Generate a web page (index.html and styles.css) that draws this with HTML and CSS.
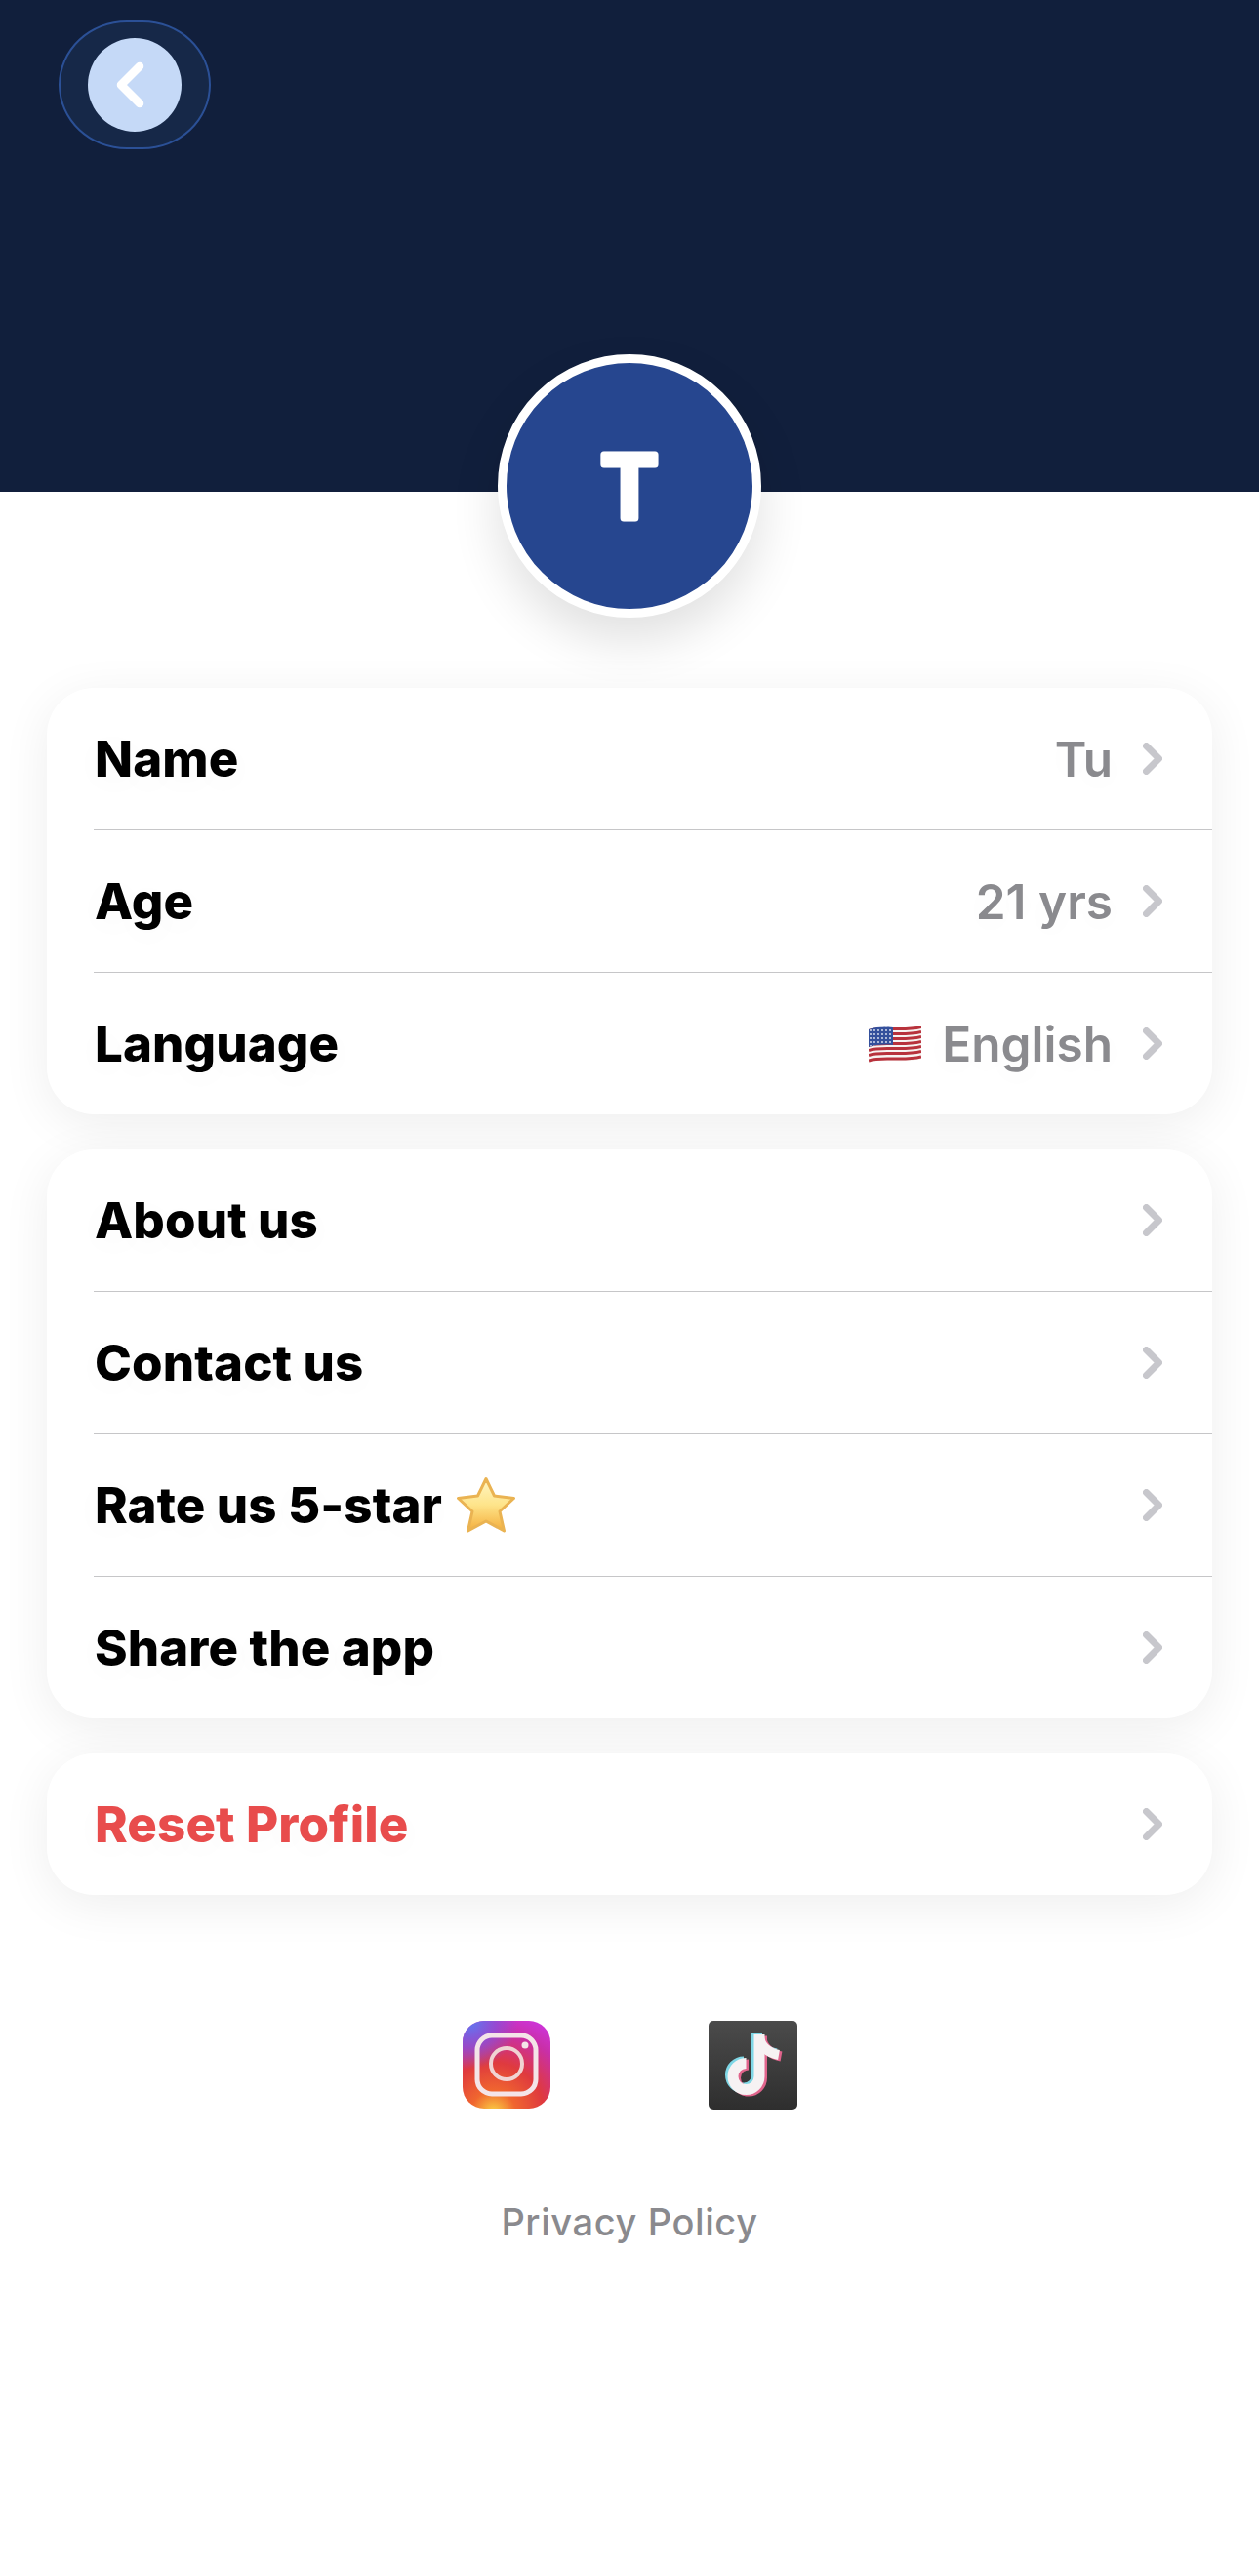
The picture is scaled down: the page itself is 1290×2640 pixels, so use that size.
FILE: index.html
```html
<!DOCTYPE html>
<html lang="en">
<head>
    <meta charset="UTF-8">
    <meta name="viewport" content="width=device-width, initial-scale=1.0">
    <title>Profile</title>
    <link rel="stylesheet" href="styles.css">
</head>
<body>
    <svg class="defs" width="0" height="0">
        <symbol id="chevron" viewBox="0 0 20 33">
            <path d="M3.5 3.5 L16.5 16.5 L3.5 29.5" fill="none" stroke="#c7c7cc" stroke-width="7" stroke-linecap="round" stroke-linejoin="round"/>
        </symbol>
    </svg>

    <header class="header">
        <div class="back-btn">
            <div class="back-circle">
                <svg width="96" height="96" viewBox="0 0 96 96">
                    <path d="M53 29 L34 48 L53 67" fill="none" stroke="#fff" stroke-width="8.500" stroke-linecap="round" stroke-linejoin="round"/>
                </svg>
            </div>
        </div>
    </header>

    <div class="avatar">
        <svg width="252" height="252" viewBox="0 0 252 252">
            <text class="avatar-letter" x="126" y="159">T</text>
        </svg>
    </div>

    <main class="cards">
        <section class="card">
            <div class="row">
                <span class="label">Name</span>
                <span class="value">Tu</span>
                <svg class="chevron"><use href="#chevron"/></svg>
            </div>
            <div class="row">
                <span class="label">Age</span>
                <span class="value">21 yrs</span>
                <svg class="chevron"><use href="#chevron"/></svg>
            </div>
            <div class="row">
                <span class="label">Language</span>
                <svg class="flag" width="54" height="40" viewBox="0 0 54 40">
                    <defs>
                        <pattern id="stars" width="4" height="4" patternUnits="userSpaceOnUse">
                            <circle cx="2" cy="2" r="0.9" fill="#e6ebf5"/>
                        </pattern>
                    </defs>
                    <path d="M0 5 C14 0 34 6 54 1 V35 C34 40 14 34 0 39 Z" fill="#f7f3f1"/>
                    <g fill="none" stroke="#b8323c" stroke-width="3">
                        <path d="M0 6.500 C14 1.500 34 7.500 54 2.500"/>
                        <path d="M0 11.500 C14 6.500 34 12.500 54 7.500"/>
                        <path d="M0 16.500 C14 11.500 34 17.500 54 12.500"/>
                        <path d="M0 21.500 C14 16.500 34 22.500 54 17.500"/>
                        <path d="M0 26.500 C14 21.500 34 27.500 54 22.500"/>
                        <path d="M0 31.500 C14 26.500 34 32.500 54 27.500"/>
                        <path d="M0 37 C14 32 34 38 54 33"/>
                    </g>
                    <path d="M0 5 C8 2.500 16 2.200 25 3 V21 C16 20 8 20.500 0 23 Z" fill="#34509c"/>
                    <path d="M0 5 C8 2.500 16 2.200 25 3 V21 C16 20 8 20.500 0 23 Z" fill="url(#stars)"/>
                </svg>
                <span class="value value-lang">English</span>
                <svg class="chevron"><use href="#chevron"/></svg>
            </div>
        </section>

        <section class="card">
            <div class="row">
                <span class="label">About us</span>
                <svg class="chevron"><use href="#chevron"/></svg>
            </div>
            <div class="row">
                <span class="label">Contact us</span>
                <svg class="chevron"><use href="#chevron"/></svg>
            </div>
            <div class="row">
                <span class="label">Rate us 5-star</span>
                <svg class="star" width="62" height="59" viewBox="0 0 62 59">
                    <defs>
                        <linearGradient id="starFill" x1="0" y1="0" x2="0" y2="1">
                            <stop offset="0" stop-color="#fff6c4"/>
                            <stop offset="0.5" stop-color="#fee48a"/>
                            <stop offset="1" stop-color="#f4ae3c"/>
                        </linearGradient>
                    </defs>
                    <path d="M31 2.500 L39.500 20 L59.500 22.500 L45 36 L49.500 56 L31 46 L12.500 56 L17 36 L2.500 22.500 L22.500 20 Z" fill="url(#starFill)" stroke="#eab352" stroke-width="3" stroke-linejoin="round"/>
                </svg>
                <svg class="chevron"><use href="#chevron"/></svg>
            </div>
            <div class="row">
                <span class="label">Share the app</span>
                <svg class="chevron"><use href="#chevron"/></svg>
            </div>
        </section>

        <section class="card">
            <div class="row">
                <span class="label label-danger">Reset Profile</span>
                <svg class="chevron"><use href="#chevron"/></svg>
            </div>
        </section>
    </main>

    <div class="social">
        <svg width="90" height="90" viewBox="0 0 90 90">
            <defs>
                <radialGradient id="igBase" cx="0.35" cy="1.05" r="1.15">
                    <stop offset="0" stop-color="#fbd846"/>
                    <stop offset="0.22" stop-color="#f0662f"/>
                    <stop offset="0.5" stop-color="#df3a3e"/>
                    <stop offset="0.8" stop-color="#c92fa6"/>
                    <stop offset="1" stop-color="#cd34d8"/>
                </radialGradient>
                <radialGradient id="igBlue" cx="0.08" cy="0" r="0.55">
                    <stop offset="0" stop-color="#5a7cf2"/>
                    <stop offset="0.55" stop-color="#8a4fd8" stop-opacity="0.8"/>
                    <stop offset="1" stop-color="#8a4fd8" stop-opacity="0"/>
                </radialGradient>
            </defs>
            <rect width="90" height="90" rx="22" fill="url(#igBase)"/>
            <rect width="90" height="90" rx="22" fill="url(#igBlue)"/>
            <rect x="15" y="15" width="60" height="60" rx="15" fill="none" stroke="#f4e4e8" stroke-width="5"/>
            <circle cx="45" cy="44" r="16" fill="none" stroke="#f0d3d3" stroke-width="4"/>
            <circle cx="64" cy="25" r="3.500" fill="#f4e4e8"/>
        </svg>
        <svg width="91" height="91" viewBox="0 0 91 91">
            <defs>
                <linearGradient id="ttBase" x1="0" y1="0" x2="0" y2="1">
                    <stop offset="0" stop-color="#4b4b4b"/>
                    <stop offset="1" stop-color="#2e2e2e"/>
                </linearGradient>
                <g id="note" fill="none" stroke-width="11" stroke-linecap="butt">
                    <path d="M52 14 V57 A13.500 13.500 0 1 1 38.500 43.500"/>
                    <path d="M52 16 C53 26 61 33 72 35" stroke-width="10"/>
                </g>
            </defs>
            <rect width="91" height="91" rx="5" fill="url(#ttBase)"/>
            <use href="#note" stroke="#7fd7e6" x="-2.500" y="-1.500"/>
            <use href="#note" stroke="#e0648c" x="2.500" y="1.500"/>
            <use href="#note" stroke="#f6f2f3"/>
        </svg>
    </div>

    <div class="privacy">Privacy Policy</div>
</body>
</html>
```

FILE: styles.css
```css
body {
    margin: 0;
    background: #fff;
    font-family: Inter, "Liberation Sans", sans-serif;
    color: #000;
}
.defs {
    display: block;
    height: 0;
}
.header {
    box-sizing: border-box;
    height: 504px;
    padding: 21px 0 0 60px;
    background: #111f3c;
}
.back-btn {
    box-sizing: border-box;
    display: flex;
    align-items: center;
    justify-content: center;
    width: 156px;
    height: 132px;
    background: #162848;
    border: 2px solid #2b5096;
    border-radius: 70px / 66px;
}
.back-circle {
    width: 96px;
    height: 96px;
    background: #c5d9f7;
    border-radius: 50%;
}
.back-circle svg {
    display: block;
}
.avatar {
    box-sizing: border-box;
    position: relative;
    width: 270px;
    height: 270px;
    margin: -141px auto 0;
    background: #26468f;
    border: 9px solid #fff;
    border-radius: 50%;
    box-shadow: 0 24px 50px rgba(0,0,0,0.12);
}
.avatar svg {
    display: block;
}
.avatar-letter {
    font-family: Inter, sans-serif;
    font-size: 90px;
    font-weight: 600;
    text-anchor: middle;
    fill: #fff;
    stroke: #fff;
    stroke-width: 7px;
    stroke-linejoin: round;
}
.cards {
    display: flex;
    flex-direction: column;
    gap: 36px;
    margin: 72px 48px 0;
}
.card {
    background: #fff;
    border-radius: 48px;
    box-shadow: 0 10px 50px rgba(0,0,0,0.07);
}
.row {
    display: flex;
    align-items: center;
    height: 145px;
    margin-left: 48px;
    padding-right: 51px;
    border-bottom: 1px solid #c6c6c8;
}
.row:last-child {
    border-bottom: none;
}
.label {
    padding-left: 1px;
    font-size: 51px;
    font-weight: 800;
    letter-spacing: 0.1px;
    text-shadow: 0 6px 30px rgba(0,0,0,0.03);
}
.label-danger {
    color: #e84c4c;
}
.value {
    margin-left: auto;
    font-size: 49.500px;
    font-weight: 600;
    color: #8a8a8e;
    text-shadow: 0 6px 30px rgba(0,0,0,0.03);
}
.value-lang {
    margin-left: 21px;
}
.flag {
    margin-left: auto;
}
.star {
    margin-left: 14px;
}
.chevron {
    width: 20px;
    height: 33px;
    margin-left: 31px;
}
.label + .chevron,
.star + .chevron {
    margin-left: auto;
}
.social {
    display: flex;
    justify-content: center;
    gap: 162px;
    margin-top: 129px;
}
.privacy {
    margin-top: 91px;
    font-size: 38px;
    font-weight: 500;
    line-height: 48px;
    letter-spacing: 0.6px;
    text-align: center;
    color: #8a8a8e;
}
```
